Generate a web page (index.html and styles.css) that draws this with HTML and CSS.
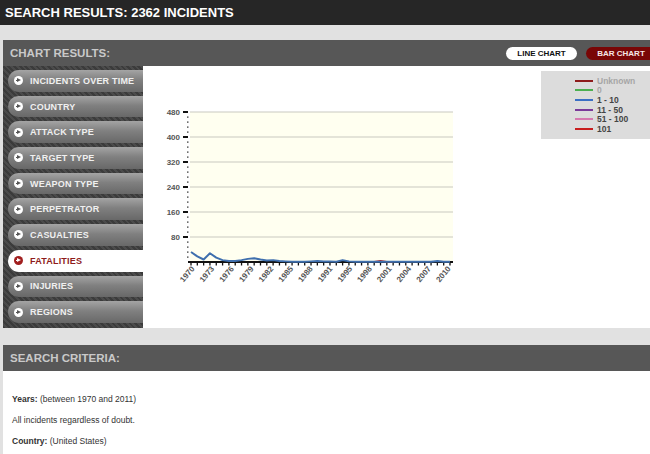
FILE: index.html
```html
<!DOCTYPE html>
<html lang="en">
<head>
    <meta charset="UTF-8">
    <title>Search Results</title>
    <link rel="stylesheet" href="styles.css">
</head>
<body>
    <header class="top-bar">
        <h1>SEARCH RESULTS: 2362 INCIDENTS</h1>
    </header>

    <section class="panel">
        <div class="panel-head">
            <h2>CHART RESULTS:</h2>
            <div class="chart-switch">
                <button class="pill pill-line">LINE CHART</button>
                <button class="pill pill-bar">BAR CHART</button>
            </div>
        </div>
        <div class="panel-body results">
            <ul class="side-menu">
                <li><span class="arrow"></span>INCIDENTS OVER TIME</li>
                <li><span class="arrow"></span>COUNTRY</li>
                <li><span class="arrow"></span>ATTACK TYPE</li>
                <li><span class="arrow"></span>TARGET TYPE</li>
                <li><span class="arrow"></span>WEAPON TYPE</li>
                <li><span class="arrow"></span>PERPETRATOR</li>
                <li><span class="arrow"></span>CASUALTIES</li>
                <li class="active"><span class="arrow"></span>FATALITIES</li>
                <li><span class="arrow"></span>INJURIES</li>
                <li><span class="arrow"></span>REGIONS</li>
            </ul>
            <div class="chart">
                <svg id="chart" width="398" height="262" viewBox="0 0 398 262"></svg>
            </div>
            <div class="legend">
                <div class="legend-row off"><span class="swatch" style="background:#8e1b1b"></span>Unknown</div>
                <div class="legend-row off"><span class="swatch" style="background:#4caf50"></span>0</div>
                <div class="legend-row"><span class="swatch" style="background:#3a6fc4"></span>1 - 10</div>
                <div class="legend-row"><span class="swatch" style="background:#7a3a9a"></span>11 - 50</div>
                <div class="legend-row"><span class="swatch" style="background:#d57ab0"></span>51 - 100</div>
                <div class="legend-row"><span class="swatch" style="background:#c81e1e"></span>101</div>
            </div>
        </div>
    </section>

    <section class="panel criteria-panel">
        <div class="panel-head">
            <h2>SEARCH CRITERIA:</h2>
        </div>
        <div class="panel-body criteria">
            <p><b>Years:</b> (between 1970 and 2011)</p>
            <p>All incidents regardless of doubt.</p>
            <p><b>Country:</b> (United States)</p>
        </div>
    </section>

    <script src="chart.js"></script>
</body>
</html>
```

FILE: styles.css
```css
body {
    margin: 0;
    padding: 0;
    background-color: #e1e1e1;
    font-family: 'Liberation Sans', Arial, sans-serif;
    color: #333;
    overflow: hidden;
    height: 454px;
}

.top-bar {
    background-color: #262626;
    height: 25px;
    padding: 0 5px;
}

.top-bar h1 {
    margin: 0;
    font-size: 13px;
    line-height: 25px;
    color: #fff;
}

.panel {
    margin: 15px 0 0 3px;
    overflow: hidden;
}

.criteria-panel {
    margin-top: 17px;
}

.panel-head {
    display: flex;
    align-items: center;
    height: 26px;
    background-color: #575757;
    padding: 0 0 0 7px;
}

.panel-head h2 {
    margin: 0;
    font-size: 11.5px;
    color: #c9c9c9;
}

.chart-switch {
    display: flex;
    gap: 9px;
    margin-left: auto;
    margin-right: -6px;
}

.pill {
    border: none;
    height: 13px;
    border-radius: 7px;
    font-family: inherit;
    font-size: 8px;
    font-weight: bold;
    padding: 0;
}

.pill-line {
    width: 71px;
    background-color: #fff;
    color: #111;
}

.pill-bar {
    width: 70px;
    background-color: #790606;
    color: #f6e6e6;
}

.panel-body {
    background-color: #fff;
}

.results {
    display: flex;
    align-items: flex-start;
    height: 262px;
}

.side-menu {
    flex: none;
    list-style: none;
    margin: 0;
    padding: 4px 0 0 5px;
    width: 135px;
    height: 258px;
    display: flex;
    flex-direction: column;
    gap: 4px;
    background: repeating-linear-gradient(45deg, #3b3b3b 0 2px, #4b4b4b 2px 4px);
}

.side-menu li {
    display: flex;
    align-items: center;
    height: 21.7px;
    border-radius: 11px 0 0 11px;
    background: linear-gradient(#a4a4a4, #808080 45%, #686868);
    color: #f0f0f0;
    font-size: 9px;
    font-weight: bold;
    letter-spacing: 0.2px;
    white-space: nowrap;
}

.side-menu li.active {
    background: #fff;
    color: #8e1b1b;
    margin-right: -4px;
}

.arrow {
    position: relative;
    flex: none;
    width: 9px;
    height: 9px;
    border-radius: 50%;
    background-color: #fff;
    margin: 0 7px 0 6px;
}

.arrow::after {
    content: '';
    position: absolute;
    left: 3px;
    top: 2px;
    border-left: 4px solid #555;
    border-top: 2.5px solid transparent;
    border-bottom: 2.5px solid transparent;
}

.arrow::before {
    content: '';
    position: absolute;
    left: 1.5px;
    top: 4px;
    width: 2px;
    height: 1px;
    background-color: #555;
}

.active .arrow {
    background-color: #a11f1f;
}

.active .arrow::after {
    border-left-color: #fff;
}

.active .arrow::before {
    background-color: #fff;
}

.chart {
    flex: none;
    width: 398px;
    height: 262px;
}

.chart svg {
    display: block;
    font-family: 'Liberation Sans', Arial, sans-serif;
}

.legend {
    flex: none;
    margin-top: 5px;
    width: 90px;
    padding: 5px 0 5px 34px;
    background-color: #dcdcdc;
}

.legend-row {
    display: flex;
    align-items: center;
    height: 9.6px;
    font-size: 8.5px;
    font-weight: bold;
    color: #444;
}

.legend-row.off {
    color: #a6a6a6;
}

.swatch {
    width: 18px;
    height: 2px;
    margin-right: 4px;
}

.criteria {
    height: 60px;
    padding: 23px 0 0 9px;
}

.criteria p {
    margin: 0 0 10px;
    font-size: 8.5px;
    line-height: 11px;
    color: #333;
}
```

FILE: chart.js
```js
// line chart of fatalities per year, drawn into the svg
const svg = document.getElementById('chart');
const NS = 'http://www.w3.org/2000/svg';

const plot = { left: 47, right: 310, top: 46, bottom: 196 };
const firstYear = 1970;
const lastYear = 2011;
const maxValue = 480;

// rough values read off the original chart
const fatalities = [32, 18, 8, 28, 14, 6, 3, 3, 6, 10, 12, 8, 5, 6, 3, 2, 1, 1, 1, 2, 3, 2, 2, 1,
    6, 2, 1, 1, 1, 1, 1, 1, 1, 1, 1, 1, 1, 1, 1, 3, 1, 1];

function el(name, attrs, text) {
    const node = document.createElementNS(NS, name);
    for (const key in attrs) node.setAttribute(key, attrs[key]);
    if (text !== undefined) node.textContent = text;
    svg.appendChild(node);
    return node;
}

function xFor(i) {
    return plot.left + 1 + i * (plot.right - plot.left - 4) / (lastYear - firstYear);
}

function yFor(v) {
    return plot.bottom - v * (plot.bottom - plot.top) / maxValue;
}

el('rect', { x: plot.left, y: plot.top, width: plot.right - plot.left, height: plot.bottom - plot.top, fill: '#fffff0' });

// grid and y axis
for (let v = 80; v <= maxValue; v += 80) {
    const y = yFor(v);
    el('line', { x1: plot.left, x2: plot.right, y1: y, y2: y, stroke: '#c9c9c0', 'stroke-width': 1 });
    el('line', { x1: 40, x2: 45, y1: y, y2: y, stroke: '#111', 'stroke-width': 2 });
    el('text', { x: 37, y: y + 3, 'text-anchor': 'end', 'font-size': 8, 'font-weight': 'bold', fill: '#555' }, v);
}
for (let v = 0; v < maxValue; v += 16) {
    if (v % 80 === 0) continue;
    const y = yFor(v);
    el('rect', { x: 44, y: y - 0.5, width: 1.5, height: 1.2, fill: '#333' });
}

// x axis
el('line', { x1: plot.left - 2, x2: plot.right, y1: plot.bottom, y2: plot.bottom, stroke: '#111', 'stroke-width': 2 });
for (let i = 0; i <= lastYear - firstYear; i++) {
    const x = xFor(i);
    el('line', { x1: x, x2: x, y1: plot.bottom, y2: plot.bottom + 3.5, stroke: '#111', 'stroke-width': 1.3 });
}

const labels = ['1970', '1973', '1976', '1979', '1982', '1985', '1988', '1991', '1995', '1998', '2001', '2004', '2007', '2010'];
labels.forEach((label, i) => {
    const x = plot.left + 5 + i * 19.7;
    const y = plot.bottom + 7;
    el('text', {
        x: x, y: y, 'text-anchor': 'end', 'font-size': 8, 'font-weight': 'bold', fill: '#555',
        transform: 'rotate(-50 ' + x + ' ' + y + ')'
    }, label);
});

// small red bump around 2001
el('polyline', {
    points: [29, 30, 31, 32].map(i => xFor(i) + ',' + yFor([1, 4, 1, 1][i - 29])).join(' '),
    fill: 'none', stroke: '#b02020', 'stroke-width': 1.5
});

el('polyline', {
    points: fatalities.map((v, i) => xFor(i) + ',' + yFor(v)).join(' '),
    fill: 'none', stroke: '#3f6fae', 'stroke-width': 2, 'stroke-linejoin': 'round'
});
```
